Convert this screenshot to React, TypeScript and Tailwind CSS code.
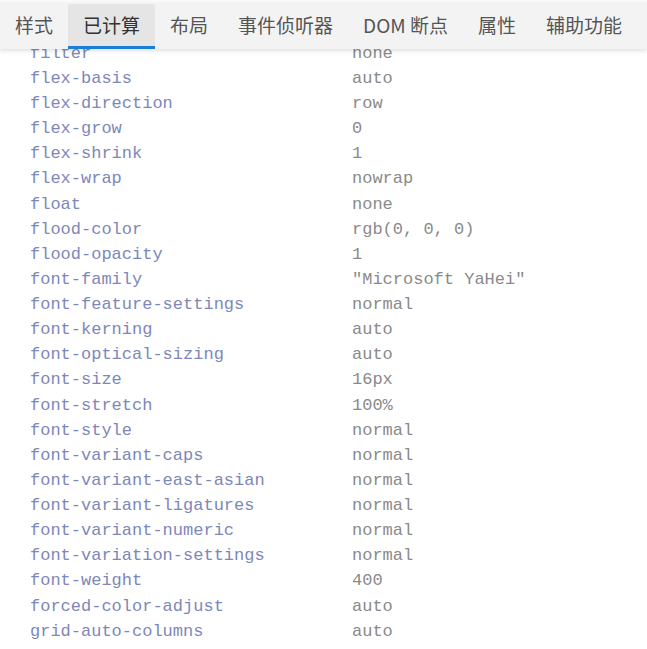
import React from "react";

const tabs = ["样式", "已计算", "布局", "事件侦听器", "DOM 断点", "属性", "辅助功能"];

const rows: [string, string][] = [
  ["filter", "none"],
  ["flex-basis", "auto"],
  ["flex-direction", "row"],
  ["flex-grow", "0"],
  ["flex-shrink", "1"],
  ["flex-wrap", "nowrap"],
  ["float", "none"],
  ["flood-color", "rgb(0, 0, 0)"],
  ["flood-opacity", "1"],
  ["font-family", "\"Microsoft YaHei\""],
  ["font-feature-settings", "normal"],
  ["font-kerning", "auto"],
  ["font-optical-sizing", "auto"],
  ["font-size", "16px"],
  ["font-stretch", "100%"],
  ["font-style", "normal"],
  ["font-variant-caps", "normal"],
  ["font-variant-east-asian", "normal"],
  ["font-variant-ligatures", "normal"],
  ["font-variant-numeric", "normal"],
  ["font-variation-settings", "normal"],
  ["font-weight", "400"],
  ["forced-color-adjust", "auto"],
  ["grid-auto-columns", "auto"],
  ["grid-auto-flow", "row"],
];

export default function App() {
  return (
    <div className="w-[647px] h-[649px] overflow-hidden bg-white flex flex-col">
      <div className="relative z-10 h-[49px] shrink-0 bg-[#f3f3f3] border-t-2 border-[#fafafa] shadow-[0_2px_4px_rgba(0,0,0,0.12)] flex items-stretch pt-[2px] pl-0 font-['Microsoft_YaHei','Noto_Sans_CJK_SC',sans-serif] text-[19px]">
        {tabs.map((t) => {
          const active = t === "已计算";
          return (
            <div
              key={t}
              className={
                active
                  ? "px-[15px] flex items-center bg-[#e5e5e5] text-[#333] border-b-[3px] border-[#1a7fd8] rounded-t-[2px] pt-[1px]"
                  : "px-[15px] flex items-center text-[#555] pb-[2px]"
              }
            >
              {t}
            </div>
          );
        })}
      </div>
      <div className="-mt-[8px] pl-[30px] font-['Liberation_Mono',monospace] text-[17px]">
        {rows.map(([k, v]) => (
          <div key={k} className="h-[25.14px] flex items-center whitespace-pre">
            <div className="w-[322px] text-[#7d87b9]">{k}</div>
            <div className="text-[#8a8a8a]">{v}</div>
          </div>
        ))}
      </div>
    </div>
  );
}
